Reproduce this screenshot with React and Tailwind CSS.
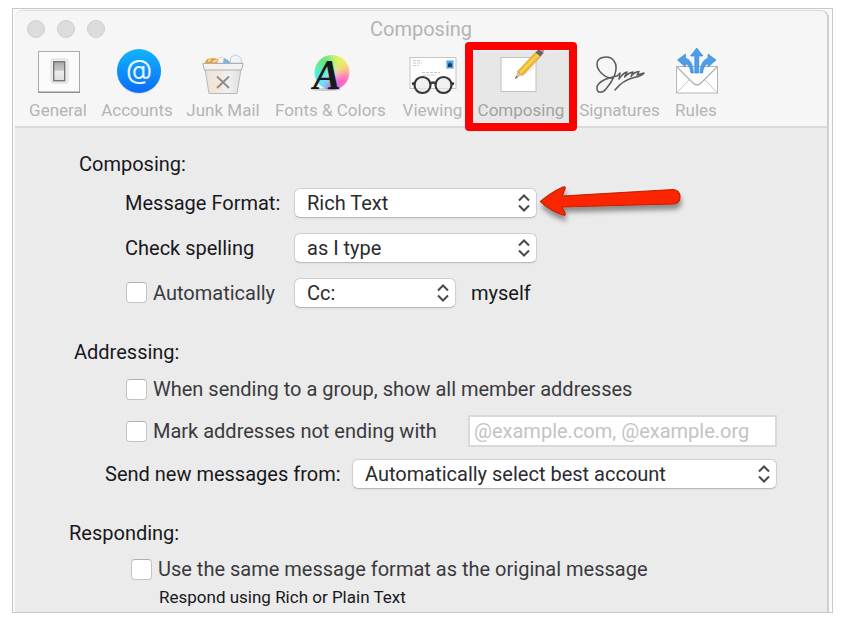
import React, { useState } from 'react';
import clsx from 'clsx';

const GeneralIcon = () => (
    <svg viewBox="0 0 48 50" className="h-[50px] w-12 shrink-0 overflow-visible" aria-hidden="true">
        <defs>
            <linearGradient id="switch" x1="0" y1="0" x2="0" y2="1">
                <stop offset="0" stopColor="#a8a8a8" />
                <stop offset=".45" stopColor="#c9c9c9" />
                <stop offset=".5" stopColor="#ededed" />
                <stop offset="1" stopColor="#dedede" />
            </linearGradient>
        </defs>
        <rect x="4.5" y="4.5" width="41" height="41" fill="#fafbfb" stroke="#a9a9a9" />
        <path d="M4 45.2h42" stroke="#909090" strokeWidth="1.6" />
        <rect x="17" y="12" width="17" height="24" rx="2" fill="#eeeeee" stroke="#dcdcdc" />
        <rect x="19.7" y="14.7" width="11" height="19" fill="url(#switch)" stroke="#777" strokeWidth="1.4" />
    </svg>
);

const AccountsIcon = () => (
    <svg viewBox="0 0 48 50" className="h-[50px] w-12 shrink-0 overflow-visible" aria-hidden="true">
        <defs>
            <linearGradient id="account" x1="0" y1="0" x2="0" y2="1">
                <stop offset="0" stopColor="#12b4fd" />
                <stop offset="1" stopColor="#0b6cf8" />
            </linearGradient>
        </defs>
        <circle cx="26" cy="25" r="22" fill="#c9cdd2" opacity=".6" />
        <circle cx="26" cy="24" r="22" fill="url(#account)" />
        <text x="26" y="32" textAnchor="middle" fontFamily="Inter, sans-serif" fontSize="27" fill="#e6f5ff">@</text>
    </svg>
);

const JunkIcon = () => (
    <svg viewBox="0 0 48 50" className="h-[50px] w-12 shrink-0 overflow-visible" aria-hidden="true">
        <defs>
            <linearGradient id="bin" x1="0" y1="0" x2="1" y2="0">
                <stop offset="0" stopColor="#e9e4df" />
                <stop offset=".3" stopColor="#f3e6d8" />
                <stop offset=".65" stopColor="#f0f0f0" />
                <stop offset="1" stopColor="#dedede" />
            </linearGradient>
        </defs>
        <path d="M5 17l3-5 6-1 5 1 1 5z" fill="#e2a03c" />
        <path d="M9 14l3-1M14 15l4-2" stroke="#fbe0ae" strokeWidth="1.5" />
        <path d="M18 16l2-5 3-1 3 6z" fill="#f7f7f7" stroke="#c9c9c9" strokeWidth=".7" />
        <path d="M24 16l1-5 4 2 3 3z" fill="#7fb5dd" />
        <path d="M31 16l1-6 5-2 5 3 1 5z" fill="#eef5fa" stroke="#b9c6cf" strokeWidth=".8" />
        <path d="M6 22l4 24.5h28L42 22z" fill="url(#bin)" stroke="#b9b9b9" />
        <path d="M3.8 16.5h40.4L42.5 23h-37z" fill="#f3f2f0" stroke="#aeaeae" />
        <path d="M18 29.5l12 11.5M30 29.5L18 41" stroke="#8c8c8c" strokeWidth="1.8" fill="none" />
    </svg>
);

const FontsIcon = () => (
    <svg viewBox="0 0 48 50" className="h-[50px] w-12 shrink-0 overflow-visible" aria-hidden="true">
        <defs>
            <filter id="mix" x="-30%" y="-30%" width="160%" height="160%">
                <feGaussianBlur stdDeviation="4" />
            </filter>
            <clipPath id="wheel">
                <circle cx="25" cy="25.5" r="17.5" />
            </clipPath>
        </defs>
        <g clipPath="url(#wheel)">
            <rect x="6" y="6" width="40" height="40" fill="#fff" />
            <g filter="url(#mix)">
                <path d="M26 25L4 24 6 4h20z" fill="#62e681" />
                <path d="M26 25V2h16l5 16z" fill="#e8f462" />
                <path d="M28 25l18-9v12z" fill="#ffb070" />
                <path d="M28 27l19-1-6 20-15-2z" fill="#fb63c0" />
                <path d="M25 28l6 19H14z" fill="#8066f2" />
                <path d="M23 25L14 46 2 37V22z" fill="#4ceaf0" />
            </g>
        </g>
        <ellipse cx="19" cy="42.5" rx="15" ry="1.5" fill="#777" opacity=".35" />
        <text x="6" y="42" fontFamily="'Liberation Serif', serif" fontSize="42" fontStyle="italic" fontWeight="bold" fill="#19181d">A</text>
    </svg>
);

const ViewingIcon = () => (
    <svg viewBox="0 0 48 50" className="h-[50px] w-12 shrink-0 overflow-visible" aria-hidden="true">
        <rect x="1" y="10.5" width="46" height="31" fill="#fff" stroke="#c4c4c4" />
        <rect x="37.5" y="13.5" width="7" height="8" fill="#4aa4ea" stroke="#a7d3f5" />
        <path d="M39 20v-3l2-1.500 2 1.500v3z" fill="#213e60" />
        <path d="M4 13.5h7M4 16h9M4 18.5h6M13 25.5h18M14 28h13" stroke="#c9c9c9" strokeDasharray="3 1" />
        <circle cx="13.5" cy="38" r="8" fill="#e9e9e9" fillOpacity=".7" stroke="#34353a" strokeWidth="2.2" />
        <circle cx="34.5" cy="38" r="8" fill="#e9e9e9" fillOpacity=".7" stroke="#34353a" strokeWidth="2.2" />
        <path d="M21 37q3-3 6 0M6 36l-3 1M42 36l3 1" stroke="#34353a" strokeWidth="2.4" fill="none" />
    </svg>
);

const ComposingIcon = () => (
    <svg viewBox="0 0 48 50" className="h-[50px] w-12 shrink-0 overflow-visible" aria-hidden="true">
        <rect x="4" y="10.5" width="35" height="34" fill="#fff" stroke="#c0c0c0" />
        <path d="M20 32l17-10 1-8z" fill="#e6e6e6" opacity=".6" />
        <path d="M18 32l3-9 5 4z" fill="#dcc29a" />
        <path d="M18 32l1-3 2 1z" fill="#555" />
        <path d="M20.5 24.5L38.5 5.5l5 4L25.5 28.5z" fill="#f4bd2f" stroke="#c48f25" strokeWidth=".7" />
        <path d="M23 26L41 7.5" stroke="#fbd970" strokeWidth="1.2" />
        <path d="M38.5 5.5L42 2l4.5 4-3 3.5z" fill="#65646a" />
        <path d="M41.5 2.5l1.5-1.5 4.5 1-.8 3.8z" fill="#d9879b" />
    </svg>
);

const SignaturesIcon = () => (
    <svg viewBox="0 0 48 50" className="h-[50px] w-12 shrink-0 overflow-visible" aria-hidden="true">
        <path
            d="M16 31C8 31 1 23 1 17C1 9 14 8 18 14C24 22 16 35 10 42C7 46 1 47 1 41C1 34 12 31 21 29L24 26L23 32Q27 26 31 25L28.5 30Q32 26 37 25L35 29.5Q38 25 43 24.5L41 28L48 26Q46 29 38 30.5Q27 33 19 43"
            fill="none" stroke="#5b5b5e" strokeWidth="1.5" strokeLinecap="round" strokeLinejoin="round"
        />
    </svg>
);

const RulesIcon = () => (
    <svg viewBox="0 0 48 50" className="h-[50px] w-12 shrink-0 overflow-visible" aria-hidden="true">
        <rect x="4.5" y="19.5" width="41" height="26.5" fill="#fff" stroke="#b5b5b5" />
        <path d="M5 45.5L18 32M45 45.5L32 32" stroke="#c4c4c4" />
        <path d="M5 20l16 16q4 4 8 0l16-16" fill="#fbfbfb" stroke="#b2b2b2" strokeWidth="1.3" />
        <g fill="#4b9fe9" stroke="#3483c9" strokeWidth=".6">
            <path d="M24.7 1L31 9h-4.200v17h-4V9h-4.300z" />
            <path d="M5.500 13l8-6v4q7.500 2.500 8 15h-2.500q-1-8-5.500-9.500V20z" />
            <path d="M44 13l-8-6v4q-7.500 2.500-8 15h2.500q1-8 5.500-9.500V20z" />
        </g>
    </svg>
);

const tabs = [
    { name: 'General', icon: GeneralIcon, width: 'w-[60px]' },
    { name: 'Accounts', icon: AccountsIcon, width: 'w-[72px]' },
    { name: 'Junk Mail', icon: JunkIcon, width: 'w-[74px]' },
    { name: 'Fonts & Colors', icon: FontsIcon, width: 'w-[115px]' },
    { name: 'Viewing', icon: ViewingIcon, width: 'w-[63px]' },
    { name: 'Composing', icon: ComposingIcon, width: 'w-[88px]' },
    { name: 'Signatures', icon: SignaturesIcon, width: 'w-[83px]' },
    { name: 'Rules', icon: RulesIcon, width: 'w-11' },
];

const Toolbar = ({ active, onChange }) => (
    <nav className="flex gap-[13px] pl-[13px] h-[79px]">
        {tabs.map(({ name, icon: Icon, width }) => (
            <button
                key={name}
                type="button"
                onClick={() => onChange(name)}
                className={clsx(
                    'relative flex shrink-0 flex-col items-center gap-px whitespace-nowrap text-[17px] leading-6',
                    width,
                    name === active ? 'text-[#a2a2a2]' : 'text-[#b4b4b4]'
                )}
            >
                {name === active && <span className="absolute -inset-x-3 -inset-y-[5px] z-10 rounded-sm border-8 border-[#fe0000]" />}
                {name === active && <span className="absolute -inset-x-1 inset-y-1 bg-[#e7e7e7]" />}
                <span className="relative flex justify-center">
                    <Icon />
                </span>
                <span className="relative">{name}</span>
            </button>
        ))}
    </nav>
);

const Select = ({ className, options, ...props }) => (
    <span className={clsx('relative inline-block shrink-0', className)}>
        <select
            {...props}
            className="h-[30px] w-full appearance-none rounded-md border border-[#cfcfcf] border-b-[#b9b9b9] bg-white pl-3 pr-8 text-xl leading-7 text-[#2b2b30] shadow-xs"
        >
            {options.map(option => <option key={option}>{option}</option>)}
        </select>
        <svg viewBox="0 0 12 18" className="pointer-events-none absolute right-[7px] top-[6px] h-[18px] w-3" fill="none" stroke="#48484a" strokeWidth="2" aria-hidden="true">
            <path d="M1 6.500L6 1.500l5 5M1 11.500l5 5 5-5" />
        </svg>
    </span>
);

const Checkbox = ({ id, label }) => (
    <label htmlFor={id} className="flex items-center gap-[6px] whitespace-nowrap text-[#3a3a3e]">
        <input
            id={id}
            type="checkbox"
            className="size-[21px] shrink-0 appearance-none rounded border border-[#c3c3c3] border-t-[#b0b0b0] bg-white checked:bg-[#3b8df5]"
        />
        {label}
    </label>
);

const Arrow = () => (
    <svg viewBox="0 0 146 40" className="pointer-events-none absolute left-full top-0 h-10 w-[146px] -translate-y-1 overflow-visible" aria-hidden="true">
        <defs>
            <filter id="shadow" x="-10%" y="-20%" width="120%" height="170%">
                <feDropShadow dx="1" dy="5" stdDeviation="2.5" floodColor="#000" floodOpacity=".4" />
            </filter>
        </defs>
        <path
            d="M3.500 17.500Q13 9 26 3Q29 2 28 5L25 12L136 5.500Q143 6 143 13Q143 19 137 20L25 23L28 29Q29 32 26 31Q12 26 3.500 17.500z"
            fill="#fb2500" stroke="#bd2508" strokeWidth="1.2" filter="url(#shadow)"
        />
    </svg>
);

const App = () => {
    const [active, setActive] = useState('Composing');

    return (
        <div className="bg-white pt-2 pl-3 pr-[11px] pb-[10px] font-['Roboto',sans-serif]">
            <div className="border border-[#c8c8c8] bg-[#fafafa] pl-[2px] pr-[3px] pt-px">
                <div className="overflow-hidden rounded-t-lg border-t border-r-2 border-t-[#d8d8d8] border-r-[#cfcfcf] bg-[#ebebeb]">
                    <header className="border-b-2 border-[#dadada] bg-[#f6f6f6]">
                        <div className="grid h-9 grid-cols-[1fr_auto_1fr] items-center px-3">
                            <div className="flex gap-3">
                                <span className="size-[18px] rounded-full border border-[#d0d0d0] bg-[#dcdcdc]" />
                                <span className="size-[18px] rounded-full border border-[#d0d0d0] bg-[#dcdcdc]" />
                                <span className="size-[18px] rounded-full border border-[#d0d0d0] bg-[#dcdcdc]" />
                            </div>
                            <h1 className="text-xl text-[#b4b4b4]">Composing</h1>
                        </div>
                        <Toolbar active={active} onChange={setActive} />
                    </header>

                    <main className="pt-5 pb-[7px] text-xl leading-6 text-[#18181c]">
                        <section>
                            <h2 className="flex h-8 items-center pl-16">Composing:</h2>
                            <div className="flex h-[45px] items-center pl-[110px]">
                                <label htmlFor="format" className="w-[169px] whitespace-nowrap">Message Format:</label>
                                <div className="relative flex">
                                    <Select id="format" className="w-[243px]" options={['Rich Text', 'Plain Text']} />
                                    <Arrow />
                                </div>
                            </div>
                            <div className="flex h-[45px] items-center pl-[110px]">
                                <label htmlFor="spelling" className="w-[169px] whitespace-nowrap">Check spelling</label>
                                <Select id="spelling" className="w-[243px]" options={['as I type', 'when I click Send', 'never']} />
                            </div>
                            <div className="flex h-[45px] items-center pl-[111px]">
                                <div className="w-[168px]">
                                    <Checkbox id="copy" label="Automatically" />
                                </div>
                                <Select aria-label="Copy type" className="w-[162px]" options={['Cc:', 'Bcc:']} />
                                <span className="pl-[15px]">myself</span>
                            </div>
                        </section>

                        <section className="pt-[21px]">
                            <h2 className="flex h-8 items-center pl-[59px]">Addressing:</h2>
                            <div className="flex h-[42px] items-center pl-[111px]">
                                <Checkbox id="group" label="When sending to a group, show all member addresses" />
                            </div>
                            <div className="flex h-[42px] items-center pl-[111px]">
                                <div className="w-[342px]">
                                    <Checkbox id="mark" label="Mark addresses not ending with" />
                                </div>
                                <input
                                    type="text"
                                    aria-label="Address endings"
                                    placeholder="@example.com, @example.org"
                                    className="h-8 w-[309px] border-2 border-[#d9d9d9] bg-white px-1 placeholder:text-[#c3c3c3]"
                                />
                            </div>
                            <div className="flex h-11 items-center pl-[90px]">
                                <label htmlFor="from" className="w-[247px] whitespace-nowrap">Send new messages from:</label>
                                <Select id="from" className="w-[425px]" options={['Automatically select best account']} />
                            </div>
                        </section>

                        <section className="pt-[21px]">
                            <h2 className="flex h-8 items-center pl-[54px]">Responding:</h2>
                            <div className="flex h-10 items-center pl-[116px]">
                                <Checkbox id="same" label="Use the same message format as the original message" />
                            </div>
                            <p className="pl-36 text-[17px] leading-4">Respond using Rich or Plain Text</p>
                        </section>
                    </main>
                </div>
            </div>
        </div>
    );
};

export default App;
